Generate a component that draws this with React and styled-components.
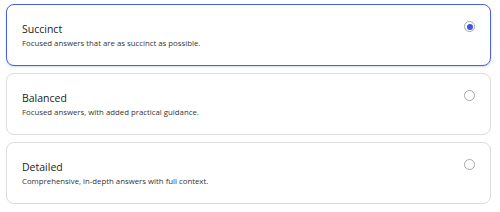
import React, { useState } from 'react';
import styled, { createGlobalStyle } from 'styled-components';

const GlobalStyle = createGlobalStyle`
  body {
    margin: 0;
    background: #ffffff;
    font-family: 'Open Sans', 'Liberation Sans', sans-serif;
  }
`;

const options = [
  { id: 'succinct', title: 'Succinct', text: 'Focused answers that are as succinct as possible.' },
  { id: 'balanced', title: 'Balanced', text: 'Focused answers, with added practical guidance.' },
  { id: 'detailed', title: 'Detailed', text: 'Comprehensive, in-depth answers with full context.' },
];

export default function App() {
  const [selected, setSelected] = useState('succinct');

  return (
    <>
      <GlobalStyle />
      <List>
        {options.map(option => (
          <Card
            key={option.id}
            $active={selected === option.id}
            onClick={() => setSelected(option.id)}
          >
            <Texts>
              <Title>{option.title}</Title>
              <Description>{option.text}</Description>
            </Texts>
            <Radio $active={selected === option.id} />
          </Card>
        ))}
      </List>
    </>
  );
}

const List = styled.div`
  display: flex;
  flex-direction: column;
  gap: 7px;
  padding: 4px 9px 0 6px;
`;

const Card = styled.div`
  box-sizing: border-box;
  height: 62px;
  display: flex;
  align-items: center;
  justify-content: space-between;
  padding: 0 15px;
  border-radius: 8px;
  border: ${props => (props.$active ? '1.5px solid #4b5fe3' : '1px solid #dcdcdc')};
  box-shadow: ${props => (props.$active ? '0 1px 2px rgba(75, 95, 227, 0.25)' : 'none')};
  background: #ffffff;
  cursor: pointer;
`;

const Texts = styled.div`
  display: flex;
  flex-direction: column;
  gap: 2px;
`;

const Title = styled.div`
  font-size: 10.5px;
  line-height: 14px;
  color: #222222;
`;

const Description = styled.div`
  font-size: 7.8px;
  line-height: 11px;
  color: #333333;
`;

const Radio = styled.span`
  box-sizing: border-box;
  align-self: flex-start;
  width: 11px;
  height: 11px;
  margin-top: 16px;
  border-radius: 50%;
  border: 1px solid #a8a8a8;
  display: flex;
  align-items: center;
  justify-content: center;
  &::after {
    content: '';
    width: 6px;
    height: 6px;
    border-radius: 50%;
    background: ${props => (props.$active ? '#3d55e0' : 'transparent')};
  }
`;
